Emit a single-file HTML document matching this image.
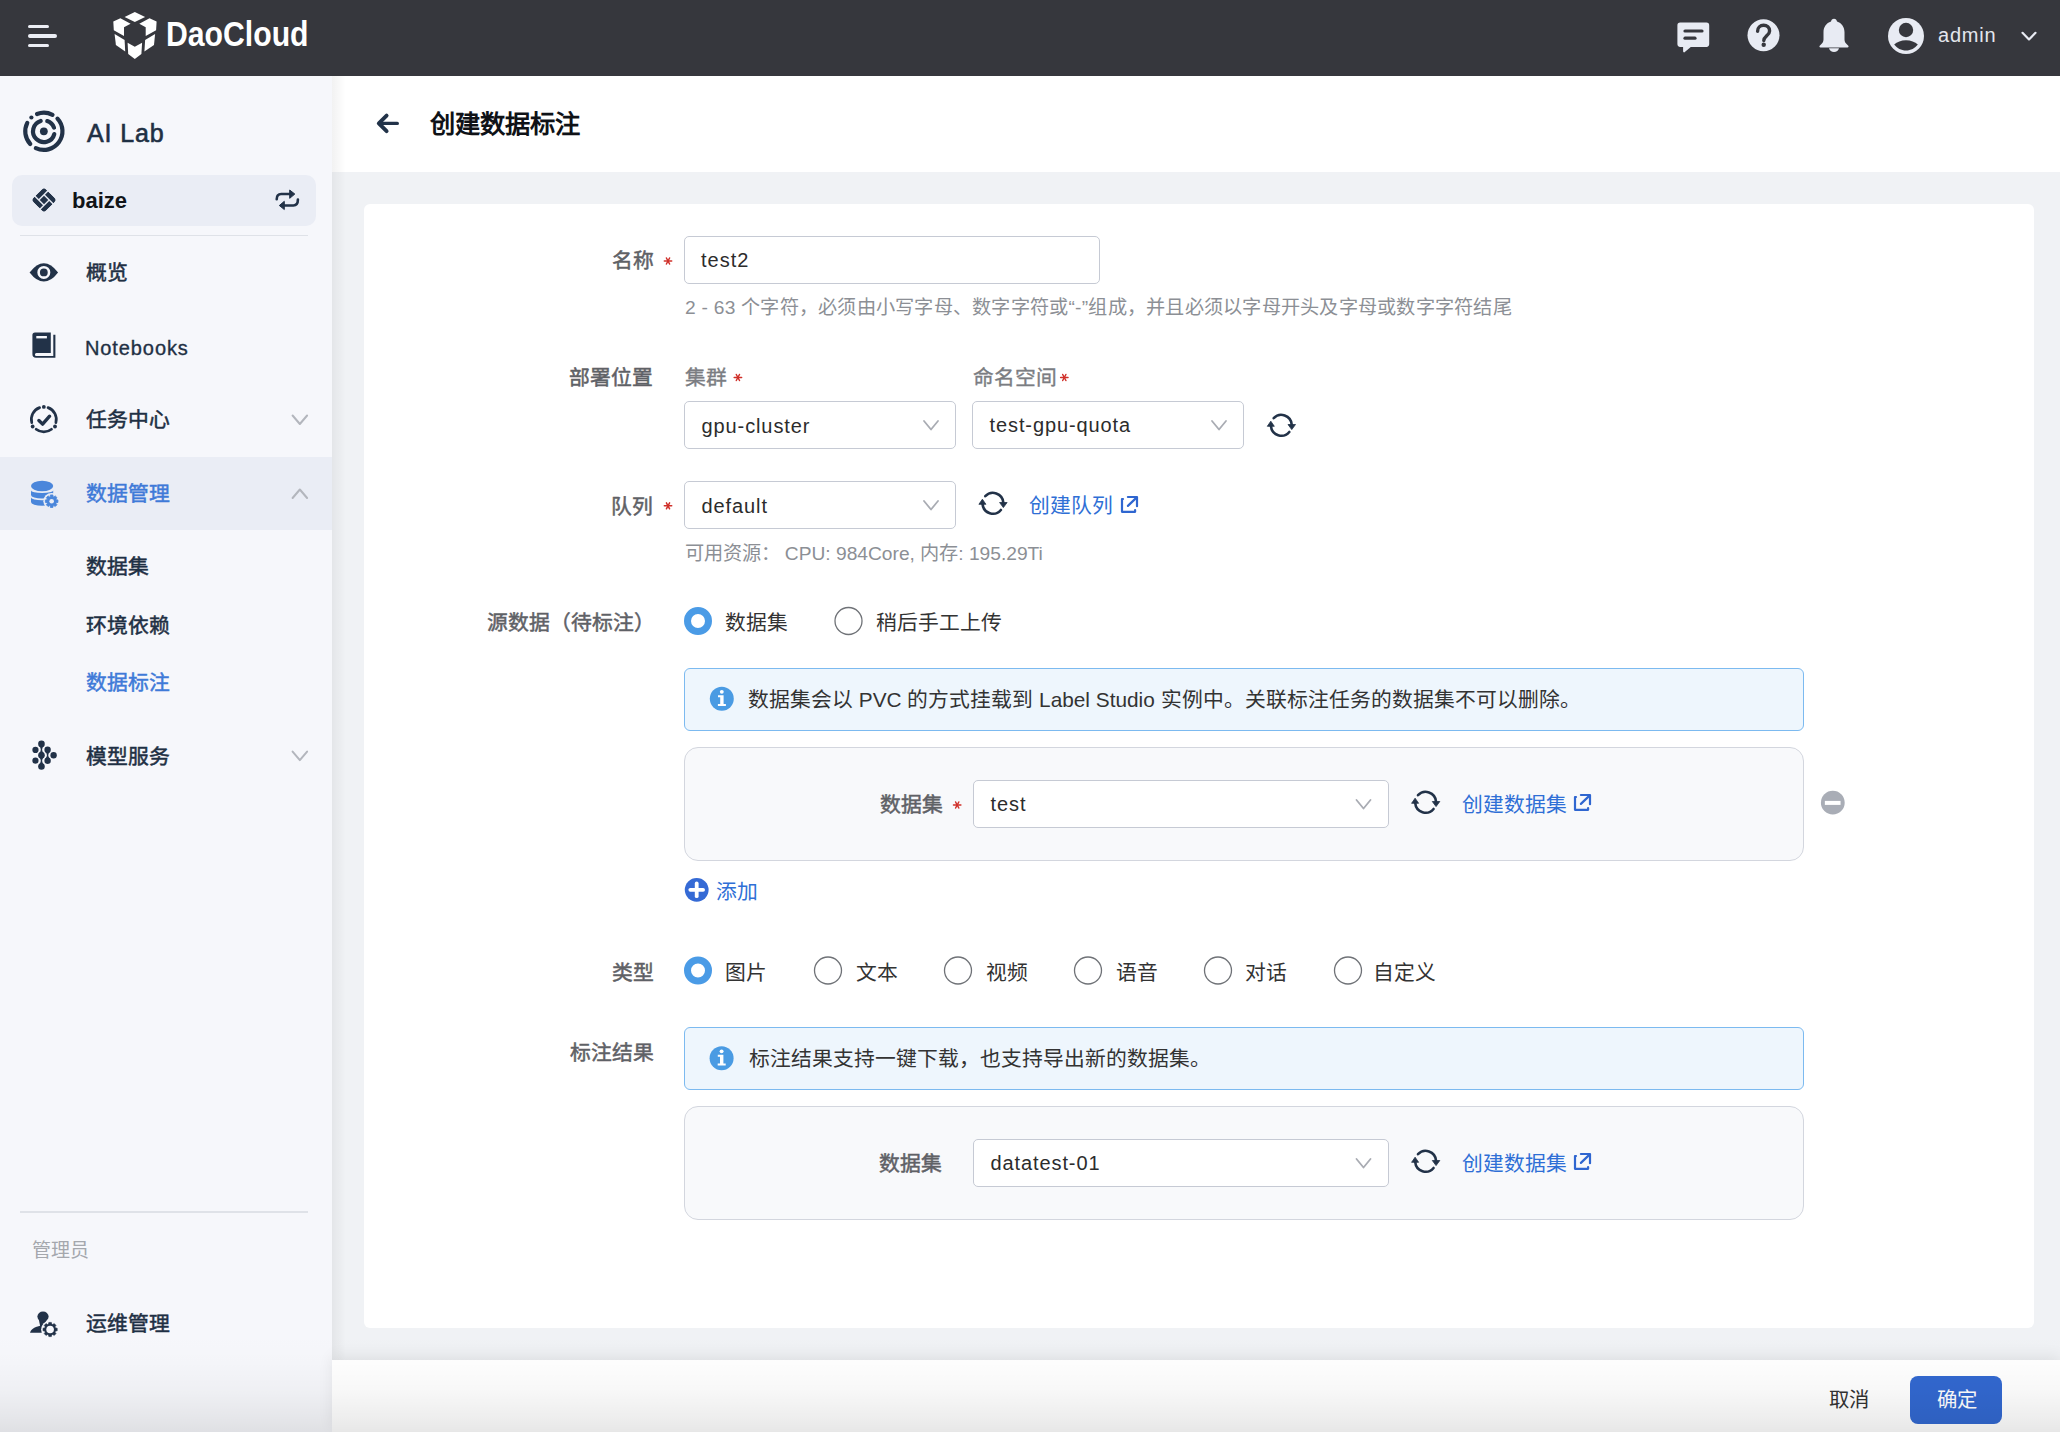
<!DOCTYPE html>
<html lang="zh-CN"><head><meta charset="utf-8">
<style>
*{box-sizing:border-box;margin:0;padding:0}
html,body{width:2060px;height:1432px;overflow:hidden;background:#f0f2f5;font-family:"Liberation Sans",sans-serif;}
.a{position:absolute}
.t{position:absolute;white-space:nowrap;line-height:1}
.inp{position:absolute;border:1px solid #c6cad4;border-radius:5px;background:#fff}
</style></head>
<body>
<div class="a" style="left:0;top:0;width:2060px;height:76px;background:#36373d"></div>
<div class="a" style="left:0;top:76px;width:332px;height:1356px;background:#f6f7fb"></div>
<div class="a" style="left:332px;top:76px;width:1728px;height:96px;background:#fff"></div>
<div class="a" style="left:332px;top:76px;width:14px;height:1356px;background:linear-gradient(to right,rgba(0,0,0,0.05),rgba(0,0,0,0))"></div>
<div class="a" style="left:364px;top:204px;width:1670px;height:1124px;background:#fff;border-radius:6px"></div>
<div class="a" style="left:332px;top:1360px;width:1728px;height:72px;background:#fff;box-shadow:0 -4px 14px rgba(0,0,0,0.07)"></div><svg class="a" style="left:0;top:0" width="80" height="76">
 <g stroke="#eceef5" stroke-linecap="round">
  <line x1="29.5" y1="26.4" x2="47.5" y2="26.4" stroke-width="3"/>
  <line x1="30" y1="36" x2="55" y2="36" stroke-width="4"/>
  <line x1="29.5" y1="45.5" x2="47.5" y2="45.5" stroke-width="3"/>
 </g></svg>
<svg class="a" style="left:108px;top:8px" width="54" height="54" viewBox="0 0 54 54">
 <g fill="#ffffff">
  <polygon points="16.6,8.9 26.8,4.1 37.1,8.9 26.8,14.0"/>
  <polygon points="5.3,13.4 12.4,10.2 22.6,15.8 16.0,19.2 16.0,28.1 5.8,22.2"/>
  <polygon points="48.6,13.4 41.5,10.2 31.3,15.8 37.7,19.2 37.7,28.1 48.1,22.2"/>
  <polygon points="6.6,26.0 16.6,31.9 17.2,43.5 7.9,37.0"/>
  <polygon points="47.1,26.0 37.1,31.9 36.4,43.5 46.0,37.0"/>
  <polygon points="19.6,34.7 26.8,38.8 34.1,34.7 33.4,46.0 26.8,50.9 20.2,46.0"/>
 </g></svg>
<svg class="a" style="left:1670px;top:12px" width="380" height="50" viewBox="1670 12 380 50">
 <g fill="#e8ebf3">
  <path d="M1680.2 22.6h26.2a2.8 2.8 0 0 1 2.8 2.8v18.7a2.8 2.8 0 0 1-2.8 2.8h-15.6l-6 5.2a1 1 0 0 1-1.7-.8v-4.4h-2.9a2.8 2.8 0 0 1-2.8-2.8v-18.7a2.8 2.8 0 0 1 2.8-2.8z"/>
  <circle cx="1763.5" cy="35.3" r="16"/>
  <path d="M1834 18.7c-1.6 0-2.8 1.3-3 2.8c-4.7 1.5-7.5 5.6-7.5 10.7v7.2c0 1.5-.6 3-1.6 4.1l-2.2 2.3c-.6.7-.1 1.8.8 1.8h27c.9 0 1.4-1.1.8-1.8l-2.2-2.3c-1-1.1-1.6-2.6-1.6-4.1v-7.2c0-5.1-2.8-9.2-7.5-10.7c-.2-1.5-1.4-2.8-3-2.8z"/>
  <path d="M1829 48.2h10c-.5 2.3-2.5 3.9-5 3.9s-4.5-1.6-5-3.9z"/>
  <circle cx="1906" cy="36" r="18"/>
 </g>
 <g stroke="#36373d" stroke-linecap="round" stroke-width="3.2" fill="none">
  <line x1="1685" y1="31" x2="1702" y2="31"/>
  <line x1="1685" y1="38.2" x2="1695" y2="38.2"/>
  <path d="M1757.6 31.2c0-3.5 2.6-5.9 6-5.9s6 2.3 6 5.6c0 4.4-5.8 5.3-5.8 9.6" stroke-width="3.4"/>
 </g>
 <circle cx="1763.7" cy="44.7" r="2.2" fill="#36373d"/>
 <circle cx="1906" cy="30" r="7.2" fill="#36373d"/>
 <path d="M1894.2 44.6c2.8-2.8 7-4.4 11.8-4.4s9 1.6 11.8 4.4c-2.8 3.7-7 6-11.8 6s-9-2.3-11.8-6z" fill="#36373d"/>
 <polyline points="2022.5,32.8 2029,39.4 2035.5,32.8" fill="none" stroke="#e8ebf3" stroke-width="2.2" stroke-linecap="round" stroke-linejoin="round"/>
</svg>
<div class="a" style="left:12px;top:175px;width:304px;height:51px;border-radius:10px;background:#eaedf5"></div>
<div class="a" style="left:20px;top:234.5px;width:288px;height:1.5px;background:#dfe2e8"></div>
<div class="a" style="left:0;top:457px;width:332px;height:73px;background:#eaedf5"></div>
<div class="a" style="left:20px;top:1211px;width:288px;height:1.5px;background:#dfe2e8"></div>
<svg class="a" style="left:0;top:76px" width="100" height="100" viewBox="0 76 100 100"><g fill="none" stroke="#223248" stroke-width="4.2" stroke-linecap="round"><path d="M37.03,113.99A18.60,18.60 0 0 1 52.50,114.83"/><path d="M27.28,122.86A18.60,18.60 0 0 0 30.25,143.99"/><path d="M57.48,118.64A18.60,18.60 0 0 1 35.84,148.09"/><path d="M40.69,120.97A10.80,10.80 0 1 0 54.28,134.10"/><path d="M47.26,121.05A10.80,10.80 0 0 1 54.00,127.61"/></g><circle cx="31.40" cy="117.48" r="2.1" fill="#223248"/><circle cx="43.85" cy="131.3" r="3.9" fill="#223248"/></svg>
<svg class="a" style="left:24px;top:180px" width="40" height="40" viewBox="-20 -20 40 40"><defs><clipPath id="bzc"><rect x="-9" y="-9" width="18" height="18" rx="3.4"/></clipPath></defs><g transform="rotate(45)" fill="#223248" clip-path="url(#bzc)"><rect x="-3.0" y="-9.0" width="12.00" height="4.55"/><rect x="4.45" y="-3.0" width="4.55" height="12.00"/><rect x="-9.0" y="4.45" width="12.00" height="4.55"/><rect x="-9.0" y="-9.0" width="4.55" height="12.00"/><rect x="-3" y="-3" width="6" height="6"/></g></svg>
<svg class="a" style="left:268px;top:182px" width="38" height="36" viewBox="268 182 38 36"><g fill="none" stroke="#223248" stroke-width="2.6" stroke-linecap="round"><path d="M276.7,199.3C276.7,196 277.8,194.06 281.2,194.06H290.5"/><path d="M297.9,199.6C297.9,203 296.8,205.5 293.4,205.5H283.5"/></g><g fill="#223248" stroke="#223248" stroke-width="1" stroke-linejoin="round"><polygon points="289.7,190.04 294.8,194.06 289.7,198.34"/><polygon points="284.3,201.35 279.3,205.5 284.3,209.5"/></g></svg>
<svg class="a" style="left:24px;top:252px" width="40" height="40" viewBox="0 0 40 40"><path d="M5.59,20.4Q19.83,2 34.1,20.4Q19.83,38.8 5.59,20.4Z" fill="#223248"/><circle cx="19.83" cy="20.4" r="5.2" fill="none" stroke="#f6f7fb" stroke-width="2.6"/></svg>
<svg class="a" style="left:24px;top:325px" width="40" height="40" viewBox="0 0 40 40"><path d="M8.4,10Q8.4,7.4 11,7.4H26.8V27.9H12.4Q10.9,27.9 10.9,29.4Q10.9,30.9 12.4,30.9H29.3V9.8H31.4V32.8H12Q8.4,32.8 8.4,29Z" fill="#223248"/><rect x="12.3" y="11" width="10.6" height="2.4" fill="#f6f7fb"/></svg>
<svg class="a" style="left:24px;top:399px" width="40" height="40" viewBox="0 0 40 40"><g fill="none" stroke="#223248" stroke-width="2.7" stroke-linecap="round"><path d="M15.62,8.63A12.50,12.50 0 0 0 7.78,23.72"/><path d="M24.04,8.63A12.50,12.50 0 0 1 31.88,23.72"/><path d="M12.13,30.25A12.50,12.50 0 0 0 27.53,30.25"/><polyline points="14.9,21.5 18.6,25.1 25.6,17.2" stroke-width="3.4" stroke-linejoin="round"/></g><g fill="#223248"><circle cx="19.83" cy="7.96" r="1.9"/><circle cx="8.66" cy="27.5" r="1.9"/><circle cx="31.0" cy="27.5" r="1.9"/></g></svg>
<svg class="a" style="left:24px;top:474px" width="40" height="40" viewBox="0 0 40 40"><g fill="#4a86db"><ellipse cx="18.1" cy="12.0" rx="11.1" ry="5.2"/><path d="M7,16.4A11.1,2.6 0 0 0 29.2,16.4V20.9A11.1,3.7 0 0 1 7,20.9Z"/><path d="M7,23.6A11.1,2.7 0 0 0 29.2,23.6V28.0A11.1,3.8 0 0 1 7,28.0Z"/></g><circle cx="27.65" cy="27.2" r="8.3" fill="#eaedf5"/><path d="M32.22,25.72L33.93,25.95L33.93,28.45L32.22,28.68L31.93,29.38L32.97,30.76L31.21,32.52L29.83,31.48L29.13,31.77L28.90,33.48L26.40,33.48L26.17,31.77L25.47,31.48L24.09,32.52L22.33,30.76L23.37,29.38L23.08,28.68L21.37,28.45L21.37,25.95L23.08,25.72L23.37,25.02L22.33,23.64L24.09,21.88L25.47,22.92L26.17,22.63L26.40,20.92L28.90,20.92L29.13,22.63L29.83,22.92L31.21,21.88L32.97,23.64L31.93,25.02Z" fill="#4a86db" stroke="#4a86db" stroke-width="0.8" stroke-linejoin="round"/><circle cx="27.65" cy="27.2" r="2.3" fill="#eaedf5"/></svg>
<svg class="a" style="left:24px;top:734px" width="40" height="40" viewBox="0 0 40 40"><g fill="#223248"><circle cx="11.45" cy="15.9" r="3.1"/><circle cx="11.45" cy="26.7" r="3.1"/><circle cx="17.46" cy="9.9" r="3.3"/><circle cx="17.46" cy="21.2" r="3.3"/><circle cx="17.46" cy="32.5" r="3.3"/><circle cx="23.6" cy="15.8" r="3.2"/><circle cx="23.6" cy="26.7" r="3.2"/><circle cx="29.6" cy="21.2" r="3.2"/><path d="M15.16,11.9Q18.46,15.55 15.16,19.2H19.76Q16.46,15.55 19.76,11.9Z"/><path d="M15.16,23.2Q18.46,26.85 15.16,30.5H19.76Q16.46,26.85 19.76,23.2Z"/><path d="M21.3,17.8Q24.6,21.25 21.3,24.7H25.900000000000002Q22.6,21.25 25.900000000000002,17.8Z"/></g></svg>
<svg class="a" style="left:24px;top:1302px" width="40" height="40" viewBox="0 0 40 40"><g fill="#223248"><ellipse cx="19" cy="14.5" rx="5.6" ry="5.1"/><polygon points="14.6,16.5 23.6,16.5 18.6,25.2 16.4,25.2"/><path d="M17.2,23.6C12.4,24.6 7.4,26.3 6,30.7H19.5Z"/></g><circle cx="26.1" cy="27.5" r="9" fill="#f6f7fb"/><path d="M31.48,25.94L33.19,26.23L33.19,28.77L31.48,29.06L31.01,30.20L32.01,31.62L30.22,33.41L28.80,32.41L27.66,32.88L27.37,34.59L24.83,34.59L24.54,32.88L23.40,32.41L21.98,33.41L20.19,31.62L21.19,30.20L20.72,29.06L19.01,28.77L19.01,26.23L20.72,25.94L21.19,24.80L20.19,23.38L21.98,21.59L23.40,22.59L24.54,22.12L24.83,20.41L27.37,20.41L27.66,22.12L28.80,22.59L30.22,21.59L32.01,23.38L31.01,24.80Z" fill="#223248" stroke="#223248" stroke-width="0.6" stroke-linejoin="round"/><circle cx="26.1" cy="27.5" r="3.8" fill="#f6f7fb"/></svg>
<svg class="a" style="left:0;top:0;overflow:visible" width="1" height="1"><polyline points="292.6,415.5 299.85,424.0 307.1,415.5" fill="none" stroke="#b3b6bd" stroke-width="2" stroke-linecap="round" stroke-linejoin="round"/></svg>
<svg class="a" style="left:0;top:0;overflow:visible" width="1" height="1"><polyline points="292.6,498.0 299.85,489.5 307.1,498.0" fill="none" stroke="#b3b6bd" stroke-width="2" stroke-linecap="round" stroke-linejoin="round"/></svg>
<svg class="a" style="left:0;top:0;overflow:visible" width="1" height="1"><polyline points="292.6,751.6 299.85,760.1 307.1,751.6" fill="none" stroke="#b3b6bd" stroke-width="2" stroke-linecap="round" stroke-linejoin="round"/></svg>
<svg class="a" style="left:0;top:0;overflow:visible" width="1" height="1"><g fill="none" stroke="#223349" stroke-linecap="round" stroke-linejoin="round"><polyline points="386.6,115.6 378.8,123.4 386.6,131.2" stroke-width="3.9"/><line x1="380" y1="123.4" x2="397.3" y2="123.4" stroke-width="3.4"/></g></svg>
<div class="inp" style="left:684px;top:236px;width:416px;height:48px"></div>
<div class="inp" style="left:684px;top:401px;width:272px;height:48px"></div>
<svg class="a" style="left:0;top:0;overflow:visible" width="1" height="1"><polyline points="924,421 931.0,429.5 938,421" fill="none" stroke="#a9acb3" stroke-width="1.8" stroke-linecap="round" stroke-linejoin="round"/></svg>
<div class="inp" style="left:972px;top:401px;width:272px;height:48px"></div>
<svg class="a" style="left:0;top:0;overflow:visible" width="1" height="1"><polyline points="1212,421 1219.0,429.5 1226,421" fill="none" stroke="#a9acb3" stroke-width="1.8" stroke-linecap="round" stroke-linejoin="round"/></svg>
<svg class="a" style="left:0;top:0;overflow:visible" width="1" height="1"><g fill="none" stroke="#223248" stroke-width="2.6" stroke-linecap="round"><path d="M1273.69,418.21A10.40,10.40 0 0 1 1291.66,424.39"/><path d="M1289.27,431.98A10.40,10.40 0 0 1 1270.94,426.21"/></g><g fill="#223248" stroke="#223248" stroke-width="0.8" stroke-linejoin="round"><polygon points="1288.0,424.5 1295.5,424.5 1291.75,429.6"/><polygon points="1267.3,426.3 1274.3,426.3 1270.8,421.2"/></g></svg>
<div class="inp" style="left:684px;top:481px;width:272px;height:48px"></div>
<svg class="a" style="left:0;top:0;overflow:visible" width="1" height="1"><polyline points="924,501 931.0,509.5 938,501" fill="none" stroke="#a9acb3" stroke-width="1.8" stroke-linecap="round" stroke-linejoin="round"/></svg>
<svg class="a" style="left:0;top:0;overflow:visible" width="1" height="1"><g fill="none" stroke="#223248" stroke-width="2.6" stroke-linecap="round"><path d="M985.29,496.21A10.40,10.40 0 0 1 1003.26,502.39"/><path d="M1000.87,509.98A10.40,10.40 0 0 1 982.54,504.21"/></g><g fill="#223248" stroke="#223248" stroke-width="0.8" stroke-linejoin="round"><polygon points="999.6,502.5 1007.1,502.5 1003.35,507.6"/><polygon points="978.9,504.3 985.9,504.3 982.4,499.2"/></g></svg>
<svg class="a" style="left:1110px;top:485px" width="40" height="40" viewBox="0 0 40 40"><g fill="none" stroke="#2f66d0" stroke-width="2.2" stroke-linecap="round" stroke-linejoin="round"><path d="M13,14H12V26.8H25.1V25.1"/><path d="M17.9,12H27V21.2"/><path d="M17.9,20.9L26,13.1"/></g></svg>
<svg class="a" style="left:0;top:0;overflow:visible" width="1" height="1"><circle cx="698" cy="621" r="10.5" fill="none" stroke="#4a9be6" stroke-width="7"/></svg>
<svg class="a" style="left:0;top:0;overflow:visible" width="1" height="1"><circle cx="848.5" cy="621" r="13.5" fill="#fff" stroke="#6f7277" stroke-width="1.3"/></svg>
<div class="a" style="left:684px;top:668px;width:1120px;height:63px;border:1.5px solid #7cbaf0;border-radius:6px;background:#eef6fd"></div>
<svg class="a" style="left:0;top:0;overflow:visible" width="1" height="1"><circle cx="721.8" cy="698.8" r="12" fill="#4a9be3"/><circle cx="721.8" cy="691.8499999999999" r="1.95" fill="#ffffff"/><path d="M718.0,695.1999999999999H723.5999999999999V704.0999999999999H725.9V706.0H717.9V704.0999999999999H720.1999999999999V697.1999999999999H718.0Z" fill="#ffffff"/></svg>
<div class="a" style="left:684px;top:747px;width:1120px;height:114px;border:1.5px solid #d3d6de;border-radius:14px;background:#f8f9fb"></div>
<div class="inp" style="left:973px;top:780px;width:416px;height:48px"></div>
<svg class="a" style="left:0;top:0;overflow:visible" width="1" height="1"><polyline points="1356.5,800 1363.5,808.5 1370.5,800" fill="none" stroke="#a9acb3" stroke-width="1.8" stroke-linecap="round" stroke-linejoin="round"/></svg>
<svg class="a" style="left:0;top:0;overflow:visible" width="1" height="1"><g fill="none" stroke="#223248" stroke-width="2.6" stroke-linecap="round"><path d="M1417.99,795.21A10.40,10.40 0 0 1 1435.96,801.39"/><path d="M1433.57,808.98A10.40,10.40 0 0 1 1415.24,803.21"/></g><g fill="#223248" stroke="#223248" stroke-width="0.8" stroke-linejoin="round"><polygon points="1432.3,801.5 1439.8,801.5 1436.05,806.5999999999999"/><polygon points="1411.6,803.3 1418.6,803.3 1415.1,798.1999999999999"/></g></svg>
<svg class="a" style="left:1562.7px;top:783.3px" width="40" height="40" viewBox="0 0 40 40"><g fill="none" stroke="#2f66d0" stroke-width="2.2" stroke-linecap="round" stroke-linejoin="round"><path d="M13,14H12V26.8H25.1V25.1"/><path d="M17.9,12H27V21.2"/><path d="M17.9,20.9L26,13.1"/></g></svg>
<svg class="a" style="left:0;top:0;overflow:visible" width="1" height="1"><circle cx="1832.8" cy="802.7" r="11.9" fill="#a9adb6"/><rect x="1824.85" y="800.9000000000001" width="15.7" height="4" fill="#fff"/></svg>
<svg class="a" style="left:0;top:0;overflow:visible" width="1" height="1"><circle cx="696.7" cy="889.8" r="11.9" fill="#356ad5"/><g stroke="#fff" stroke-width="3.8" stroke-linecap="round"><line x1="690.3000000000001" y1="889.8" x2="703.1" y2="889.8"/><line x1="696.7" y1="883.4" x2="696.7" y2="896.1999999999999"/></g></svg>
<svg class="a" style="left:0;top:0;overflow:visible" width="1" height="1"><circle cx="698" cy="970.5" r="10.5" fill="none" stroke="#4a9be6" stroke-width="7"/></svg>
<svg class="a" style="left:0;top:0;overflow:visible" width="1" height="1"><circle cx="828" cy="970.5" r="13.5" fill="#fff" stroke="#6f7277" stroke-width="1.3"/></svg>
<svg class="a" style="left:0;top:0;overflow:visible" width="1" height="1"><circle cx="958" cy="970.5" r="13.5" fill="#fff" stroke="#6f7277" stroke-width="1.3"/></svg>
<svg class="a" style="left:0;top:0;overflow:visible" width="1" height="1"><circle cx="1088" cy="970.5" r="13.5" fill="#fff" stroke="#6f7277" stroke-width="1.3"/></svg>
<svg class="a" style="left:0;top:0;overflow:visible" width="1" height="1"><circle cx="1218" cy="970.5" r="13.5" fill="#fff" stroke="#6f7277" stroke-width="1.3"/></svg>
<svg class="a" style="left:0;top:0;overflow:visible" width="1" height="1"><circle cx="1348" cy="970.5" r="13.5" fill="#fff" stroke="#6f7277" stroke-width="1.3"/></svg>
<div class="a" style="left:684px;top:1027px;width:1120px;height:63px;border:1.5px solid #7cbaf0;border-radius:6px;background:#eef6fd"></div>
<svg class="a" style="left:0;top:0;overflow:visible" width="1" height="1"><circle cx="721.6" cy="1058.3" r="12" fill="#4a9be3"/><circle cx="721.6" cy="1051.35" r="1.95" fill="#ffffff"/><path d="M717.8000000000001,1054.7H723.4V1063.6H725.7V1065.5H717.7V1063.6H720.0V1056.7H717.8000000000001Z" fill="#ffffff"/></svg>
<div class="a" style="left:684px;top:1106px;width:1120px;height:114px;border:1.5px solid #d3d6de;border-radius:14px;background:#f8f9fb"></div>
<div class="inp" style="left:973px;top:1139px;width:416px;height:48px"></div>
<svg class="a" style="left:0;top:0;overflow:visible" width="1" height="1"><polyline points="1356.5,1159 1363.5,1167.5 1370.5,1159" fill="none" stroke="#a9acb3" stroke-width="1.8" stroke-linecap="round" stroke-linejoin="round"/></svg>
<svg class="a" style="left:0;top:0;overflow:visible" width="1" height="1"><g fill="none" stroke="#223248" stroke-width="2.6" stroke-linecap="round"><path d="M1417.99,1154.21A10.40,10.40 0 0 1 1435.96,1160.39"/><path d="M1433.57,1167.98A10.40,10.40 0 0 1 1415.24,1162.21"/></g><g fill="#223248" stroke="#223248" stroke-width="0.8" stroke-linejoin="round"><polygon points="1432.3,1160.5 1439.8,1160.5 1436.05,1165.6"/><polygon points="1411.6,1162.3 1418.6,1162.3 1415.1,1157.2"/></g></svg>
<svg class="a" style="left:1562.7px;top:1142.3px" width="40" height="40" viewBox="0 0 40 40"><g fill="none" stroke="#2f66d0" stroke-width="2.2" stroke-linecap="round" stroke-linejoin="round"><path d="M13,14H12V26.8H25.1V25.1"/><path d="M17.9,12H27V21.2"/><path d="M17.9,20.9L26,13.1"/></g></svg>
<svg class="a" style="left:0;top:0;overflow:visible" width="1" height="1"><g stroke="#d0302a" stroke-width="1.5" stroke-linecap="round"><line x1="664.3" y1="261" x2="671.7" y2="261"/><line x1="666.4" y1="258.0" x2="669.6" y2="264.0"/><line x1="669.6" y1="258.0" x2="666.4" y2="264.0"/></g></svg>
<svg class="a" style="left:0;top:0;overflow:visible" width="1" height="1"><g stroke="#d0302a" stroke-width="1.5" stroke-linecap="round"><line x1="734.1999999999999" y1="377.5" x2="741.6" y2="377.5"/><line x1="736.3" y1="374.5" x2="739.5" y2="380.5"/><line x1="739.5" y1="374.5" x2="736.3" y2="380.5"/></g></svg>
<svg class="a" style="left:0;top:0;overflow:visible" width="1" height="1"><g stroke="#d0302a" stroke-width="1.5" stroke-linecap="round"><line x1="1060.6" y1="377.5" x2="1068.0" y2="377.5"/><line x1="1062.7" y1="374.5" x2="1065.8999999999999" y2="380.5"/><line x1="1065.8999999999999" y1="374.5" x2="1062.7" y2="380.5"/></g></svg>
<svg class="a" style="left:0;top:0;overflow:visible" width="1" height="1"><g stroke="#d0302a" stroke-width="1.5" stroke-linecap="round"><line x1="664.3" y1="505.8" x2="671.7" y2="505.8"/><line x1="666.4" y1="502.8" x2="669.6" y2="508.8"/><line x1="669.6" y1="502.8" x2="666.4" y2="508.8"/></g></svg>
<svg class="a" style="left:0;top:0;overflow:visible" width="1" height="1"><g stroke="#d0302a" stroke-width="1.5" stroke-linecap="round"><line x1="953.5" y1="805" x2="960.9000000000001" y2="805"/><line x1="955.6" y1="802.0" x2="958.8000000000001" y2="808.0"/><line x1="958.8000000000001" y1="802.0" x2="955.6" y2="808.0"/></g></svg>
<div class="a" style="left:1910px;top:1376px;width:92px;height:48px;border-radius:8px;background:#3268d0"></div><div class="t" id="logo" style="left:165.50px;top:17.10px;font-size:34.5px;font-weight:700;color:#ffffff;transform:scaleX(0.875);transform-origin:0 0;">DaoCloud</div>
<div class="t" id="admin" style="left:1938.00px;top:25.00px;font-size:20px;font-weight:400;color:#e3e6ed;letter-spacing:0.8px;">admin</div>
<div class="t" id="ailab" style="left:87.00px;top:121.00px;font-size:25px;font-weight:400;color:#1f3044;letter-spacing:0.9px;-webkit-text-stroke:0.6px #1f3044;">AI Lab</div>
<div class="t" id="baize" style="left:72.00px;top:190.00px;font-size:22px;font-weight:700;color:#111418;">baize</div>
<div class="t" id="nav1" style="left:86.00px;top:263.00px;font-size:20.8px;font-weight:400;color:#1f3044;-webkit-text-stroke:0.5px #1f3044;">概览</div>
<div class="t" id="nav2" style="left:85.00px;top:337.50px;font-size:20px;font-weight:400;color:#1f3044;letter-spacing:0.9px;-webkit-text-stroke:0.35px #1f3044;">Notebooks</div>
<div class="t" id="nav3" style="left:86.00px;top:410.00px;font-size:20.8px;font-weight:400;color:#1f3044;-webkit-text-stroke:0.5px #1f3044;">任务中心</div>
<div class="t" id="nav4" style="left:86.00px;top:484.00px;font-size:20.8px;font-weight:400;color:#3f7ad8;-webkit-text-stroke:0.5px #3f7ad8;">数据管理</div>
<div class="t" id="sub1" style="left:86.00px;top:556.50px;font-size:20.8px;font-weight:400;color:#1f3044;-webkit-text-stroke:0.5px #1f3044;">数据集</div>
<div class="t" id="sub2" style="left:86.00px;top:616.00px;font-size:20.8px;font-weight:400;color:#1f3044;-webkit-text-stroke:0.5px #1f3044;">环境依赖</div>
<div class="t" id="sub3" style="left:86.00px;top:673.00px;font-size:20.8px;font-weight:400;color:#3f7ad8;-webkit-text-stroke:0.5px #3f7ad8;">数据标注</div>
<div class="t" id="nav5" style="left:86.00px;top:747.00px;font-size:20.8px;font-weight:400;color:#1f3044;-webkit-text-stroke:0.5px #1f3044;">模型服务</div>
<div class="t" id="admgrp" style="left:31.50px;top:1240.50px;font-size:19px;font-weight:400;color:#a4a7ad;">管理员</div>
<div class="t" id="nav6" style="left:86.00px;top:1314.00px;font-size:20.8px;font-weight:400;color:#1f3044;-webkit-text-stroke:0.5px #1f3044;">运维管理</div>
<div class="t" id="title" style="left:429.50px;top:112.00px;font-size:25.3px;font-weight:700;color:#0f1217;">创建数据标注</div>
<div class="t" id="l_name" style="left:612.00px;top:251.00px;font-size:20.8px;font-weight:400;color:#5f6166;-webkit-text-stroke:0.5px #5f6166;">名称</div>
<div class="t" id="v_name" style="left:701.00px;top:249.50px;font-size:20px;font-weight:400;color:#2c2c2c;letter-spacing:1.0px;">test2</div>
<div class="t" id="h_name" style="left:685.00px;top:297.50px;font-size:19.2px;font-weight:400;color:#8c8f95;letter-spacing:0.25px;">2 - 63 个字符，必须由小写字母、数字字符或“-”组成，并且必须以字母开头及字母或数字字符结尾</div>
<div class="t" id="l_deploy" style="left:569.00px;top:368.00px;font-size:20.8px;font-weight:400;color:#5f6166;-webkit-text-stroke:0.5px #5f6166;">部署位置</div>
<div class="t" id="l_cluster" style="left:685.00px;top:368.00px;font-size:20.8px;font-weight:400;color:#7b7d82;-webkit-text-stroke:0.35px #7b7d82;">集群</div>
<div class="t" id="l_ns" style="left:973.00px;top:368.00px;font-size:20.8px;font-weight:400;color:#7b7d82;-webkit-text-stroke:0.35px #7b7d82;">命名空间</div>
<div class="t" id="v_cluster" style="left:701.50px;top:415.90px;font-size:20px;font-weight:400;color:#2c2c2c;letter-spacing:0.9px;">gpu-cluster</div>
<div class="t" id="v_ns" style="left:989.50px;top:414.90px;font-size:20px;font-weight:400;color:#2c2c2c;letter-spacing:0.9px;">test-gpu-quota</div>
<div class="t" id="l_queue" style="left:611.00px;top:496.50px;font-size:20.8px;font-weight:400;color:#5f6166;-webkit-text-stroke:0.5px #5f6166;">队列</div>
<div class="t" id="v_queue" style="left:701.50px;top:495.90px;font-size:20px;font-weight:400;color:#2c2c2c;letter-spacing:0.9px;">default</div>
<div class="t" id="lk_queue" style="left:1029.00px;top:495.50px;font-size:20.8px;font-weight:400;color:#2f6fd6;">创建队列</div>
<div class="t" id="h_queue" style="left:684.50px;top:543.50px;font-size:19.2px;font-weight:400;color:#8c8f95;">可用资源： CPU: 984Core, 内存: 195.29Ti</div>
<div class="t" id="l_src" style="left:486.50px;top:612.50px;font-size:20.8px;font-weight:400;color:#5f6166;-webkit-text-stroke:0.5px #5f6166;">源数据（待标注）</div>
<div class="t" id="r_ds" style="left:725.00px;top:612.50px;font-size:20.8px;font-weight:400;color:#333333;">数据集</div>
<div class="t" id="r_later" style="left:876.00px;top:612.50px;font-size:20.8px;font-weight:400;color:#333333;">稍后手工上传</div>
<div class="t" id="alert1" style="left:748.00px;top:690.00px;font-size:20.8px;font-weight:400;color:#333333;">数据集会以 PVC 的方式挂载到 Label Studio 实例中。关联标注任务的数据集不可以删除。</div>
<div class="t" id="l_ds1" style="left:879.50px;top:795.00px;font-size:20.8px;font-weight:400;color:#5f6166;-webkit-text-stroke:0.5px #5f6166;">数据集</div>
<div class="t" id="v_ds1" style="left:990.50px;top:794.00px;font-size:20px;font-weight:400;color:#2c2c2c;letter-spacing:0.9px;">test</div>
<div class="t" id="lk_ds1" style="left:1461.50px;top:795.00px;font-size:20.8px;font-weight:400;color:#2f6fd6;">创建数据集</div>
<div class="t" id="add" style="left:716.00px;top:882.00px;font-size:20.8px;font-weight:400;color:#2f6fd6;">添加</div>
<div class="t" id="l_type" style="left:611.50px;top:962.50px;font-size:20.8px;font-weight:400;color:#5f6166;-webkit-text-stroke:0.5px #5f6166;">类型</div>
<div class="t" id="t0" style="left:725.00px;top:962.50px;font-size:20.8px;font-weight:400;color:#333333;">图片</div>
<div class="t" id="t1" style="left:856.00px;top:962.50px;font-size:20.8px;font-weight:400;color:#333333;">文本</div>
<div class="t" id="t2" style="left:986.00px;top:962.50px;font-size:20.8px;font-weight:400;color:#333333;">视频</div>
<div class="t" id="t3" style="left:1116.00px;top:962.50px;font-size:20.8px;font-weight:400;color:#333333;">语音</div>
<div class="t" id="t4" style="left:1245.00px;top:962.50px;font-size:20.8px;font-weight:400;color:#333333;">对话</div>
<div class="t" id="t5" style="left:1373.00px;top:962.50px;font-size:20.8px;font-weight:400;color:#333333;">自定义</div>
<div class="t" id="l_res" style="left:569.50px;top:1042.50px;font-size:20.8px;font-weight:400;color:#5f6166;-webkit-text-stroke:0.5px #5f6166;">标注结果</div>
<div class="t" id="alert2" style="left:748.50px;top:1049.00px;font-size:20.8px;font-weight:400;color:#333333;">标注结果支持一键下载，也支持导出新的数据集。</div>
<div class="t" id="l_ds2" style="left:878.50px;top:1154.00px;font-size:20.8px;font-weight:400;color:#5f6166;-webkit-text-stroke:0.5px #5f6166;">数据集</div>
<div class="t" id="v_ds2" style="left:990.50px;top:1152.50px;font-size:20px;font-weight:400;color:#2c2c2c;letter-spacing:0.9px;">datatest-01</div>
<div class="t" id="lk_ds2" style="left:1461.50px;top:1154.00px;font-size:20.8px;font-weight:400;color:#2f6fd6;">创建数据集</div>
<div class="t" id="cancel" style="left:1828.70px;top:1390.00px;font-size:20.4px;font-weight:400;color:#333333;">取消</div>
<div class="t" id="ok" style="left:1936.50px;top:1390.00px;font-size:20.4px;font-weight:400;color:#ffffff;">确定</div><div class="a" style="left:0;top:1332px;width:2060px;height:100px;background:linear-gradient(to bottom,rgba(0,0,0,0) 0%,rgba(0,0,0,0.008) 30%,rgba(0,0,0,0.03) 60%,rgba(0,0,0,0.065) 85%,rgba(0,0,0,0.095) 100%)"></div>
</body></html>
